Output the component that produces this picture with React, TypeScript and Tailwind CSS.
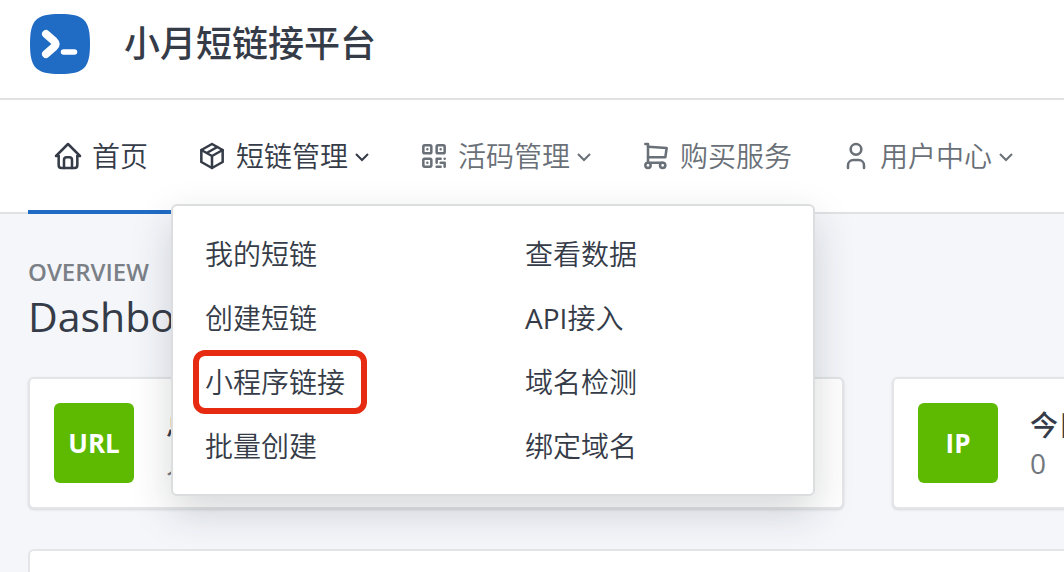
import { useState } from "react";
import type { ReactNode } from "react";

type NavItem = {
  label: string;
  icon: ReactNode;
  hasMenu?: boolean;
  dark?: boolean;
};

const menuLinks = [
  ["我的短链", "创建短链", "小程序链接", "批量创建"],
  ["查看数据", "API接入", "域名检测", "绑定域名"],
];

function Icon({ children }: { children: ReactNode }) {
  return (
    <svg
      className="h-8 w-8 shrink-0"
      viewBox="0 0 24 24"
      fill="none"
      stroke="currentColor"
      strokeWidth={1.9}
      strokeLinecap="round"
      strokeLinejoin="round"
      aria-hidden="true"
    >
      {children}
    </svg>
  );
}

const navItems: NavItem[] = [
  {
    label: "首页",
    dark: true,
    icon: (
      <Icon>
        <path d="M5 12H3l9-9 9 9h-2" />
        <path d="M5 12v7a2 2 0 0 0 2 2h10a2 2 0 0 0 2-2v-7" />
        <path d="M9 21v-6a2 2 0 0 1 2-2h2a2 2 0 0 1 2 2v6" />
      </Icon>
    ),
  },
  {
    label: "短链管理",
    dark: true,
    hasMenu: true,
    icon: (
      <Icon>
        <path d="M12 3l8 4.5v9L12 21l-8-4.5v-9L12 3" />
        <path d="M12 12l8-4.5M12 12v9M12 12L4 7.5M16 5.25l-8 4.5" />
      </Icon>
    ),
  },
  {
    label: "活码管理",
    hasMenu: true,
    icon: (
      <Icon>
        <rect x="4" y="4" width="6" height="6" rx="1" />
        <rect x="14" y="4" width="6" height="6" rx="1" />
        <rect x="4" y="14" width="6" height="6" rx="1" />
        <path d="M7 17v.01M7 7v.01M17 7v.01M14 14h3M20 14v.01M14 14v3M14 20h3M17 17h3M20 17v3" />
      </Icon>
    ),
  },
  {
    label: "购买服务",
    icon: (
      <Icon>
        <circle cx="6" cy="19" r="2" />
        <circle cx="17" cy="19" r="2" />
        <path d="M17 17H6V3H4" />
        <path d="M6 5l14 1-1 7H6" />
      </Icon>
    ),
  },
  {
    label: "用户中心",
    hasMenu: true,
    icon: (
      <Icon>
        <circle cx="12" cy="7" r="4" />
        <path d="M6 21v-2a4 4 0 0 1 4-4h4a4 4 0 0 1 4 4v2" />
      </Icon>
    ),
  },
];

function Chevron() {
  return (
    <svg className="ml-1.5 h-4 w-4 shrink-0" viewBox="0 0 16 16" fill="none" stroke="currentColor" strokeWidth={2} aria-hidden="true">
      <path d="M2 6l6 6 6-6" />
    </svg>
  );
}

function MenuLabel({ label }: { label: string }) {
  if (label === "小程序链接") {
    return <span className="-ml-3 rounded-xl border-6 border-[#e62b12] py-1.5 pl-1.5 pr-4">{label}</span>;
  }
  if (label.startsWith("API")) {
    return (
      <span>
        <span className="font-normal">API</span>
        {label.slice(3)}
      </span>
    );
  }
  return <span>{label}</span>;
}

function StatCard({ badge, title, value }: { badge: string; title: string; value: string }) {
  return (
    <div className="flex min-w-0 items-center gap-8 rounded-md border-2 border-[#e3e5e8] bg-white p-6 shadow-sm">
      <div className="flex h-20 w-20 shrink-0 items-center justify-center rounded-md bg-[#5eba00] text-[26px] font-bold text-white">
        {badge}
      </div>
      <div className="whitespace-nowrap leading-10">
        <div className="font-medium">{title}</div>
        <div className="leading-9 text-[#72777e]">{value}</div>
      </div>
    </div>
  );
}

export default function App() {
  const [isOpen, setIsOpen] = useState(true);

  return (
    <div className="min-h-screen overflow-hidden bg-[#f4f6fa] font-['Open_Sans','Noto_Sans_CJK_SC',sans-serif] text-[28px] leading-10 text-[#353c48]">
      <header className="flex h-25 items-center gap-8 border-b-2 border-[#e0e1e3] bg-white px-7 pb-2.5">
        <svg className="h-16 w-16" viewBox="0 0 64 64" aria-hidden="true">
          <path d="M32 2c24 0 30 6 30 30s-6 30-30 30S2 56 2 32 8 2 32 2" fill="#206bc4" />
          <path d="M18 22l8 7q3 3 0 6l-8 7" fill="none" stroke="#fff" strokeWidth="8" strokeLinecap="round" strokeLinejoin="round" />
          <path d="M35.5 40h11" stroke="#fff" strokeWidth="5.5" strokeLinecap="round" />
        </svg>
        <h1 className="text-4xl font-medium">小月短链接平台</h1>
      </header>

      <nav className="relative border-b-2 border-[#e0e1e3] bg-white pl-7">
        <ul className="flex">
          {navItems.map((item, i) => (
            <li key={item.label} className={i === 0 ? "-mb-0.5 border-b-4 border-[#206bc4]" : ""}>
              <button
                type="button"
                className={`flex h-[110px] items-center whitespace-nowrap px-6 pt-0.5 font-[350] ${item.dark ? "text-[#353c48]" : "text-[#6a7077]"}`}
                aria-expanded={i === 1 ? isOpen : undefined}
                onClick={i === 1 ? () => setIsOpen(!isOpen) : undefined}
              >
                {item.icon}
                <span className="ml-2">{item.label}</span>
                {item.hasMenu && <Chevron />}
              </button>
            </li>
          ))}
        </ul>

        {isOpen && (
          <div className="absolute left-[171px] top-26 z-10 grid grid-cols-2 rounded-md border-2 border-[#dcdddf] bg-white py-4 font-[350] shadow-[0_16px_40px_rgba(35,40,46,0.18)]">
            {menuLinks.map((column, i) => (
              <div key={i} className="w-80">
                {column.map((label) => (
                  <a key={label} href="#" className="flex h-16 items-center px-8">
                    <MenuLabel label={label} />
                  </a>
                ))}
              </div>
            ))}
          </div>
        )}
      </nav>

      <main className="px-7 pt-[42px]">
        <div className="text-2xl font-semibold leading-8 text-[#7b8087]">OVERVIEW</div>
        <h2 className="text-[41px] leading-14">Dashboard</h2>
        <div className="mt-[33px] grid w-[calc(500%/3)] grid-cols-2 gap-12">
          <StatCard badge="URL" title="总链接" value="人均" />
          <StatCard badge="IP" title="今日IP" value="0" />
        </div>
        <div className="mt-10 h-40 w-[calc(500%/3)] rounded-md border-2 border-[#e3e5e8] bg-white" />
      </main>
    </div>
  );
}
